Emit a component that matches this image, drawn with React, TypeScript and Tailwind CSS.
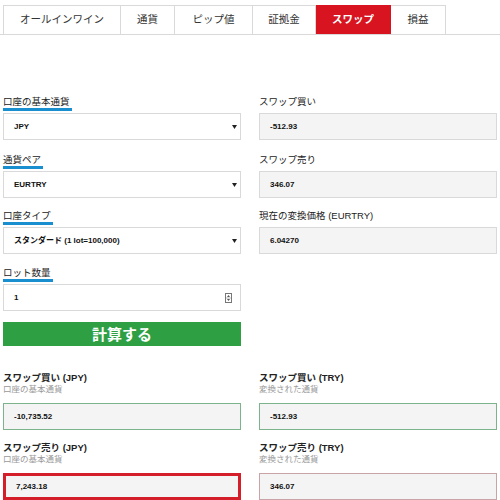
import React from 'react';

const JP = { fontFamily: '"Liberation Sans", "Noto Sans CJK JP", sans-serif' };

const tabs = [
  { label: 'オールインワイン', w: 'w-[118px]' },
  { label: '通貨', w: 'w-[54px]' },
  { label: 'ピップ値', w: 'w-[78px]' },
  { label: '証拠金', w: 'w-[63px]' },
  { label: 'スワップ', w: 'w-[75px]', active: true },
  { label: '損益', w: 'w-[55px]' },
];

const Arrow = () => (
  <svg width="5" height="4" viewBox="0 0 5 4" className="shrink-0">
    <path d="M0 0h5L2.5 4z" fill="#222" />
  </svg>
);

const Spinner = () => (
  <svg width="7" height="10" viewBox="0 0 7 10" className="shrink-0">
    <rect x="0.5" y="0.5" width="6" height="9" fill="none" stroke="#777" strokeWidth="1" />
    <path d="M3.5 2L5 4H2z" fill="#555" />
    <path d="M3.5 8L5 6H2z" fill="#555" />
    <path d="M1 5h5" stroke="#aaa" strokeWidth="0.8" />
  </svg>
);

const UnderLabel = ({ text }: { text: string }) => (
  <div className="h-[17px] flex items-start">
    <span className="block text-[9.5px] leading-[12px] text-[#222] border-b-[3px] border-[#1a8fd0] pr-[2px]">
      {text}
    </span>
  </div>
);

const PlainLabel = ({ text }: { text: string }) => (
  <div className="h-[17px] text-[9.5px] leading-[12px] text-[#222]">{text}</div>
);

const SelectBox = ({ value }: { value: string }) => (
  <div className="h-[27px] bg-white border border-[#d9d9d9] flex items-center justify-between pl-[10px] pr-[3px]">
    <span className="text-[8px] font-bold text-[#111]">{value}</span>
    <Arrow />
  </div>
);

const ReadBox = ({ value, border = 'border border-[#d9d9d9]' }: { value: string; border?: string }) => (
  <div className={`h-[27px] bg-[#f4f4f4] ${border} flex items-center pl-[10px]`}>
    <span className="text-[8px] font-bold text-[#111]">{value}</span>
  </div>
);

const ResultLabel = ({ title, sub }: { title: string; sub: string }) => (
  <div className="h-[32px]">
    <div className="text-[9.5px] leading-[13px] font-bold text-[#222]">{title}</div>
    <div className="text-[8.5px] leading-[11px] text-[#999]">{sub}</div>
  </div>
);

export default function App() {
  return (
    <div className="w-[500px] h-[500px] bg-white overflow-hidden" style={JP}>
      {/* Tabs */}
      <div className="pt-[5px] border-b border-[#d9d9d9]">
        <div className="flex ml-[3px] h-[29px]">
          {tabs.map((t, i) => (
            <div
              key={t.label}
              className={`${t.w} flex items-center justify-center text-[10.5px] border-t border-r ${
                i === 0 ? 'border-l' : ''
              } ${t.active ? 'bg-[#d7141f] border-[#d7141f] text-white font-bold' : 'border-[#d9d9d9] text-[#333]'}`}
            >
              {t.label}
            </div>
          ))}
        </div>
      </div>

      {/* Inputs */}
      <div className="mt-[61px] px-[3px] grid grid-cols-[238px_238px] gap-x-[18px] items-start">
        <div className="flex flex-col">
          <UnderLabel text="口座の基本通貨" />
          <SelectBox value="JPY" />
          <div className="h-[14px]" />
          <UnderLabel text="通貨ペア" />
          <SelectBox value="EURTRY" />
          <div className="h-[12px]" />
          <UnderLabel text="口座タイプ" />
          <SelectBox value="スタンダード (1 lot=100,000)" />
          <div className="h-[13px]" />
          <UnderLabel text="ロット数量" />
          <div className="h-[27px] bg-white border border-[#d9d9d9] flex items-center justify-between pl-[10px] pr-[8px]">
            <span className="text-[8px] font-bold text-[#111]">1</span>
            <Spinner />
          </div>
          <button className="mt-[11px] h-[24px] bg-[#2ea043] text-white text-[15px] font-bold leading-none flex items-center justify-center">
            計算する
          </button>
        </div>
        <div className="flex flex-col">
          <PlainLabel text="スワップ買い" />
          <ReadBox value="-512.93" />
          <div className="h-[14px]" />
          <PlainLabel text="スワップ売り" />
          <ReadBox value="346.07" />
          <div className="h-[12px]" />
          <PlainLabel text="現在の変換価格 (EURTRY)" />
          <ReadBox value="6.04270" />
        </div>
      </div>

      {/* Results */}
      <div className="mt-[25px] px-[3px] grid grid-cols-[238px_238px] gap-x-[18px]">
        <div className="flex flex-col">
          <ResultLabel title="スワップ買い (JPY)" sub="口座の基本通貨" />
          <ReadBox value="-10,735.52" border="border border-[#7db38a]" />
          <div className="h-[11px]" />
          <ResultLabel title="スワップ売り (JPY)" sub="口座の基本通貨" />
          <ReadBox value="7,243.18" border="border-[3px] border-[#d41f2a]" />
        </div>
        <div className="flex flex-col">
          <ResultLabel title="スワップ買い (TRY)" sub="変換された通貨" />
          <ReadBox value="-512.93" border="border border-[#7db38a]" />
          <div className="h-[11px]" />
          <ResultLabel title="スワップ売り (TRY)" sub="変換された通貨" />
          <ReadBox value="346.07" border="border border-[#c9a3a6]" />
        </div>
      </div>
    </div>
  );
}
